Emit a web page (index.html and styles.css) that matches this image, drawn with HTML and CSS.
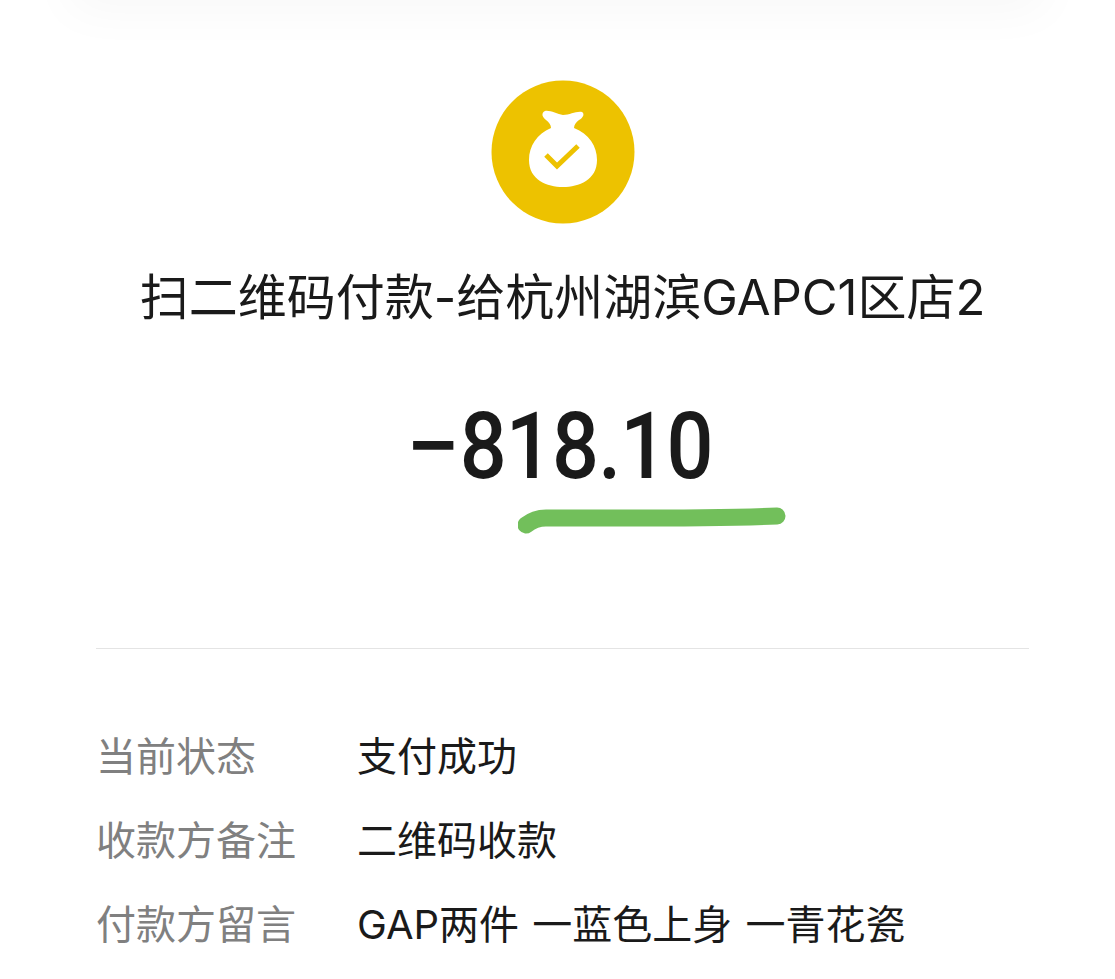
FILE: index.html
```html
<!DOCTYPE html>
<html lang="zh-CN">
<head>
<meta charset="utf-8">
<title>账单详情</title>
<link rel="stylesheet" href="styles.css">
</head>
<body>
<div class="top-shade"></div>
<main class="page">
  <section class="summary">
    <svg class="icon" width="144" height="144" viewBox="0 0 144 144">
      <circle cx="72" cy="72" r="71.5" fill="#edc200"/>
      <path fill="#fff" d="M54 31c5-1 12 3 18 4 7 0 13-4 19-3 3 2 1 6-3 8-3 2-5 5-5 8 15 6 23 18 23 32 0 20-18 27-34 27s-34-7-34-27c0-14 8-26 22-32 0-3-2-6-5-8-4-3-5-7-1-9z"/>
      <path fill="none" stroke="#edc200" stroke-width="5" d="M55 75l11 11 21-20"/>
    </svg>
    <h1 class="title">扫二维码付款-给杭州湖滨GAPC1区店2</h1>
    <div class="amount"><span class="minus">−</span>818.10</div>
    <svg class="mark" width="270" height="30" viewBox="0 0 270 30">
      <path fill="none" stroke="#72bf5b" stroke-width="17" stroke-linecap="round" d="M8 19c5-4 10-7 20-7 70 0 160 1 231-2"/>
    </svg>
  </section>
  <dl class="details">
    <div class="row"><dt>当前状态</dt><dd>支付成功</dd></div>
    <div class="row"><dt>收款方备注</dt><dd>二维码收款</dd></div>
    <div class="row"><dt>付款方留言</dt><dd>GAP两件 一蓝色上身 一青花瓷</dd></div>
  </dl>
</main>
</body>
</html>
```
FILE: styles.css
```css
* { box-sizing: border-box; }
html, body { margin: 0; height: 100%; }
body {
  background: #fff;
  color: #1a1a1a;
  font-family: "Inter", "Noto Sans CJK SC", sans-serif;
  overflow: hidden;
  position: relative;
}
.top-shade {
  position: absolute;
  top: -60px;
  left: 70px;
  right: 70px;
  height: 60px;
  box-shadow: 0 10px 50px rgba(0, 0, 0, 0.035);
}
.page { padding: 80px 86px 0 96px; }
.summary {
  display: flex;
  flex-direction: column;
  align-items: center;
  height: 569px;
  border-bottom: 1px solid #e4e4e4;
}
.icon { display: block; flex: none; }
.title {
  margin: 46px 0 0;
  font-size: 49px;
  line-height: 56px;
  font-weight: 400;
  white-space: nowrap;
}
.amount {
  margin: 73px 0 0 -6px;
  font-size: 93px;
  line-height: 96px;
  font-weight: 500;
  font-family: "Roboto", "Noto Sans", sans-serif;
  transform: scaleX(0.89);
  letter-spacing: -1px;
}
.minus {
  display: inline-block;
  margin-right: 8px;
  transform: translateX(3px) scaleX(1.17);
}
.mark { display: block; margin: 11px 0 0 180px; flex: none; }
.details { margin: 0; padding-top: 63px; }
.row {
  display: flex;
  align-items: center;
  height: 84px;
  font-size: 40px;
  word-spacing: 2px;
}
.row dt { width: 261px; color: #808080; }
.row dd { margin: 0; white-space: nowrap; }
```
